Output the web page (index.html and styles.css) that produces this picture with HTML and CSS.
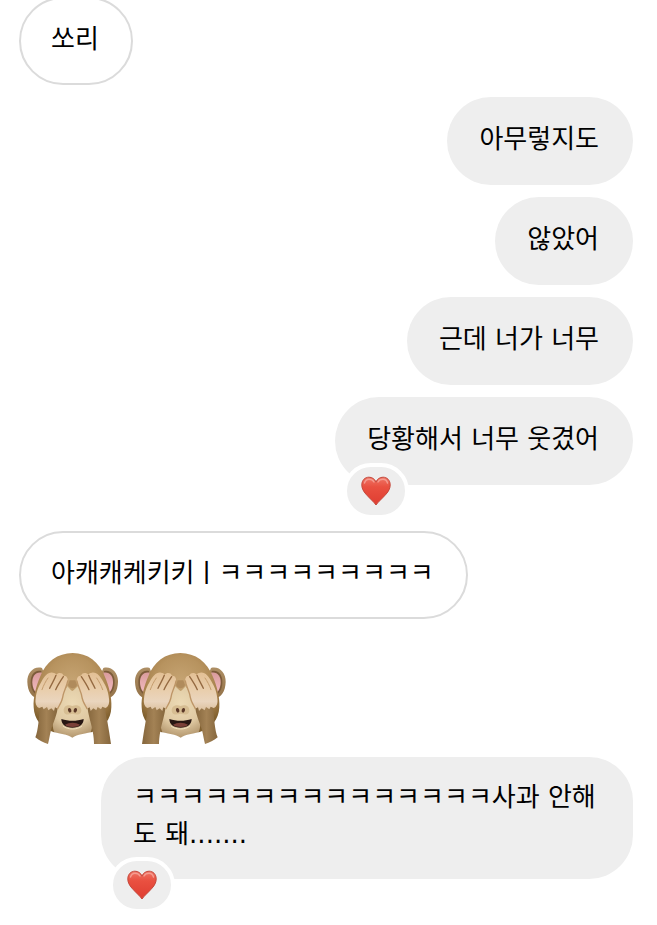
FILE: index.html
```html
<!DOCTYPE html>
<html lang="ko">
<head>
<meta charset="utf-8">
<meta name="viewport" content="width=device-width, initial-scale=1">
<title>대화</title>
<link rel="stylesheet" href="styles.css">
</head>
<body>
<svg class="defs" aria-hidden="true">
  <defs>
    <radialGradient id="fur" gradientUnits="userSpaceOnUse" cx="156" cy="110" r="150">
      <stop offset="0" stop-color="#c6a473"/>
      <stop offset="0.5" stop-color="#b7935f"/>
      <stop offset="0.8" stop-color="#a37d48"/>
      <stop offset="1" stop-color="#80602f"/>
    </radialGradient>
    <linearGradient id="ear" x1="0" y1="0" x2="0" y2="1">
      <stop offset="0" stop-color="#ad8e64"/>
      <stop offset="1" stop-color="#937248"/>
    </linearGradient>
    <linearGradient id="pink" x1="0" y1="0" x2="0" y2="1">
      <stop offset="0" stop-color="#d99b9c"/>
      <stop offset="1" stop-color="#f3bdc2"/>
    </linearGradient>
    <radialGradient id="muzzle" gradientUnits="userSpaceOnUse" cx="156" cy="175" r="105">
      <stop offset="0" stop-color="#ecdab5"/>
      <stop offset="0.6" stop-color="#dfc9a2"/>
      <stop offset="1" stop-color="#b1946b"/>
    </radialGradient>
    <linearGradient id="hand" x1="0" y1="0" x2="0" y2="1">
      <stop offset="0" stop-color="#e3c095"/>
      <stop offset="0.45" stop-color="#e9ceac"/>
      <stop offset="0.75" stop-color="#ead5be"/>
      <stop offset="1" stop-color="#dcc09d"/>
    </linearGradient>
    <linearGradient id="arm" x1="0" y1="0" x2="1" y2="0">
      <stop offset="0" stop-color="#85663c"/>
      <stop offset="0.5" stop-color="#a38255"/>
      <stop offset="1" stop-color="#85663c"/>
    </linearGradient>
    <linearGradient id="heart-fill" x1="0" y1="0" x2="0" y2="1">
      <stop offset="0" stop-color="#ef7566"/>
      <stop offset="0.35" stop-color="#e95040"/>
      <stop offset="1" stop-color="#df3d31"/>
    </linearGradient>

    <symbol id="heart" viewBox="0 0 30 30">
      <path d="M15 29C13.500 26.500 8.500 22.300 4.800 18C2.200 15 .8 12.200.8 8.900C.8 4.200 4 1.200 7.900 1.200C11.200 1.200 13.800 3 15 6.100C16.200 3 18.800 1.200 22.100 1.200C26 1.200 29.200 4.200 29.200 8.900C29.200 12.200 27.800 15 25.200 18C21.500 22.300 16.500 26.500 15 29Z" fill="url(#heart-fill)" stroke="#c4483b" stroke-width="1"/>
      <path d="M3.500 7C4.500 4.300 6 3.300 8 3.300C10.300 3.300 12 4.300 13 6M17 6C18 4.200 19.700 3.300 22 3.300C24 3.300 25.700 4.500 26.500 7" fill="none" stroke="#f59c90" stroke-width="1.400" stroke-linecap="round"/>
    </symbol>

    <symbol id="monkey" viewBox="20 24 273 273">
      <g id="ear-side">
        <path d="M65 69C41 62 20 83 21 111C22 139 34 158 56 162L72 145V86Z" fill="url(#ear)"/>
        <path d="M63 78C43 73 30 90 31 113C32 133 39 145 52 151L65 132Z" fill="#7c5b3a"/>
        <path d="M65 83C46 79 35 94 36 113C37 130 43 141 53 145L65 126Z" fill="url(#pink)"/>
      </g>
      <use href="#ear-side" transform="translate(314 0) scale(-1 1)"/>
      <path d="M157 24C202 24 237 51 253 94C265 121 275 158 273 187C272 224 251 249 213 262H101C63 249 42 224 40 187C38 158 48 121 60 94C76 51 112 24 157 24Z" fill="url(#fur)"/>
      <path d="M141 124C147 130 151 136 156 138C161 136 166 130 172 124L206 181C214 203 220 240 212 260C193 267 172 267 156 278C140 267 119 267 101 260C93 240 98 204 107 181Z" fill="url(#muzzle)"/>
      <path d="M143 120C149 133 164 133 170 120L165 106H148Z" fill="#b08b5c"/>
      <path d="M130 196C130 183 143 177 156 183C169 177 183 183 183 196C182 213 168 209 156 206C144 209 131 213 130 196Z" fill="#d6bd92"/>
      <ellipse cx="148" cy="196" rx="5" ry="7" fill="#5b3827" transform="rotate(-18 148 196)"/>
      <ellipse cx="165" cy="196" rx="5" ry="7" fill="#5b3827" transform="rotate(18 165 196)"/>
      <path d="M123 222C145 229 168 229 190 222C190 239 176 248 156 248C137 248 123 239 123 222Z" fill="#281713"/>
      <path d="M134 239C147 231 166 231 179 239C171 248 141 248 134 239Z" fill="#7b4038"/>
      <path d="M128 243C142 255 171 255 185 243" fill="none" stroke="#f1e0bd" stroke-width="3"/>
      <path d="M60 176L112 180C113 207 98 232 92 256C88 272 86 286 83 297C69 293 57 287 45 277C54 254 55 224 60 176Z" fill="url(#arm)"/>
      <path d="M253 176L201 180C202 207 213 234 217 259C220 275 221 288 221 297H272C269 275 265 252 261 229C257 212 255 198 253 176Z" fill="url(#arm)"/>
      <g id="hand-side">
        <path d="M46 161C48 139 55 124 64 109C72 95 82 81 97 83C104 83 107 86 108 89C113 83 126 81 130 92C140 91 145 101 141 114C137 130 129 143 127 157C125 170 117 181 112 191L104 187L101 198L93 190L84 196L80 186L70 193L66 185L57 189C47 185 44 173 46 161Z" fill="url(#hand)"/>
        <path d="M107 91C102 105 94 116 88 130M129 95C121 107 113 119 106 134" fill="none" stroke="#946941" stroke-width="4" stroke-linecap="round"/>
        <path d="M142 108C139 126 129 140 127 157C125 170 117 181 112 191" fill="none" stroke="#bd9567" stroke-width="4" stroke-linecap="round"/>
        <path d="M83 99C76 109 70 120 65 134" fill="none" stroke="#c59d6e" stroke-width="3" stroke-linecap="round"/>
      </g>
      <use href="#hand-side" transform="translate(312 0) scale(-1 1)"/>
    </symbol>
  </defs>
</svg>
<main class="chat">
  <p class="bubble received">쏘리</p>
  <p class="bubble sent">아무렇지도</p>
  <p class="bubble sent">않았어</p>
  <p class="bubble sent">근데 너가 너무</p>
  <div class="bubble sent reacted">당황해서 너무 웃겼어
    <span class="reaction"><svg class="heart" role="img" aria-label="하트"><use href="#heart"/></svg></span>
  </div>
  <p class="bubble received">아캐캐케키키ㅣㅋㅋㅋㅋㅋㅋㅋㅋㅋ</p>
  <div class="stickers">
    <svg class="monkey" role="img" aria-label="눈을 가린 원숭이"><use href="#monkey"/></svg>
    <svg class="monkey mirrored" role="img" aria-label="눈을 가린 원숭이"><use href="#monkey"/></svg>
  </div>
  <div class="bubble sent multiline reacted">ㅋㅋㅋㅋㅋㅋㅋㅋㅋㅋㅋㅋㅋㅋㅋ사과 안해도 돼.......
    <span class="reaction"><svg class="heart" role="img" aria-label="하트"><use href="#heart"/></svg></span>
  </div>
</main>
</body>
</html>
```
FILE: styles.css
```css
* {
  box-sizing: border-box;
}

body {
  margin: 0;
  background: #fff;
  color: #000;
  font-family: "DejaVu Sans", "Noto Sans CJK KR", sans-serif;
  font-size: 26px;
  line-height: 37px;
}

.defs {
  position: absolute;
  width: 0;
  height: 0;
}

.chat {
  display: flex;
  flex-direction: column;
  gap: 12px;
  margin-top: -3px;
  padding: 0 24px 16px 19px;
}

.bubble {
  position: relative;
  max-width: 532px;
  margin: 0;
  padding: 24px 34px 27px 32px;
  border-radius: 44px;
  word-break: break-all;
}

.sent {
  align-self: flex-end;
  background: #eee;
}

.received {
  align-self: flex-start;
  padding: 22px 32px 25px 30px;
  border: 2px solid #dbdbdb;
}

.bubble.multiline {
  padding-top: 22px;
  padding-bottom: 26px;
}

.reacted {
  margin-bottom: 34px;
}

.reaction {
  position: absolute;
  bottom: -34px;
  left: 8px;
  display: grid;
  place-items: center;
  width: 66px;
  height: 56px;
  border: 4px solid #fff;
  border-radius: 28px;
  background: #eee;
}

.heart {
  width: 30px;
  height: 30px;
}

.stickers {
  display: flex;
  gap: 17px;
  margin: 22px 0 1px;
  padding-left: 8px;
}

.monkey {
  width: 91px;
  height: 91px;
}

.mirrored {
  transform: scaleX(-1);
}
```
